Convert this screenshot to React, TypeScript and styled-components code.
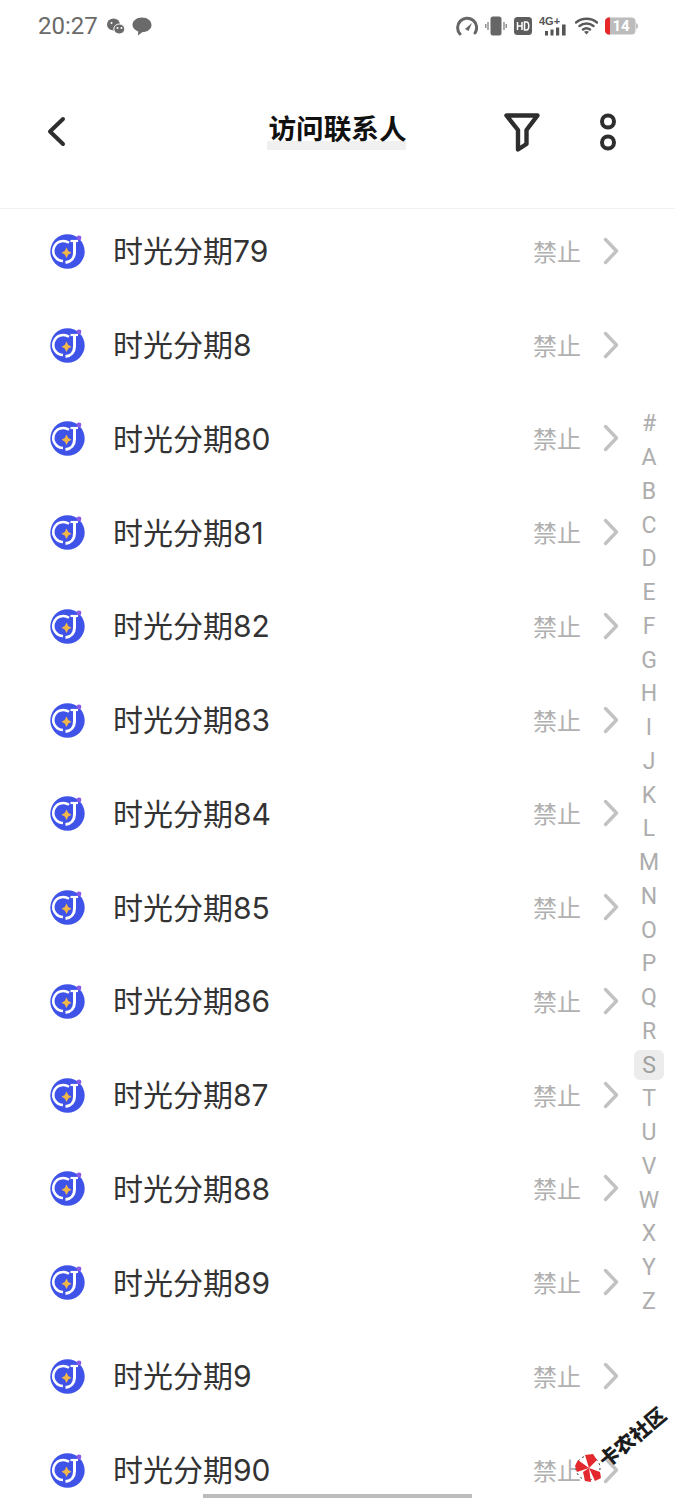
import React from "react";
import styled, { createGlobalStyle } from "styled-components";

const Global = createGlobalStyle`
  html, body { margin: 0; padding: 0; background: #fff; }
  body { font-family: Inter, "Noto Sans CJK SC", sans-serif; }
`;
const Page = styled.div`
  position: relative; width: 675px; height: 1500px; overflow: hidden; background: #fff;
`;
const StatusBar = styled.div`
  height: 52px; display: flex; align-items: center; justify-content: space-between;
  padding: 0 37px 0 38px; box-sizing: border-box; color: #666;
`;
const StatusGroup = styled.div`display: flex; align-items: center; gap: 7px;`;
const Time = styled.span`
  font-family: Roboto, sans-serif; font-size: 24px; line-height: 52px; color: #6a6a6a; margin-right: 2px;
`;
const Nav = styled.div`
  height: 157px; box-sizing: border-box; border-bottom: 1px solid #f0f0f0;
  display: grid; grid-template-columns: 1fr auto 1fr; align-items: center; padding: 4px 46px 0;
`;
const NavRight = styled.div`
  display: flex; justify-content: flex-end; align-items: center; gap: 59px; padding-right: 12px;
`;
const Title = styled.div`
  font-family: "Noto Sans CJK SC", sans-serif; font-size: 27.6px; font-weight: 700; color: #111;
  line-height: 42px; position: relative; z-index: 0; margin-top: -11px; white-space: nowrap;
  &::after { content: ""; position: absolute; z-index: -1; left: -2px; right: 0; top: 35px; height: 9px; background: #f0f0f0; }
`;
const List = styled.div`margin-top: -5px;`;
const Row = styled.div`
  height: 93.75px; display: flex; align-items: center; padding: 0 56px 0 50px; box-sizing: border-box;
`;
const Name = styled.span`
  margin-left: 27px; padding-top: 1px; flex: 1; font-size: 30px; color: #333; line-height: 40px;
  font-family: Inter, "Noto Sans CJK SC", sans-serif;
`;
const State = styled.span`
  font-family: "Noto Sans CJK SC", sans-serif; font-size: 24px; color: #b0b0b0; margin-right: 22px; line-height: 34px;
`;
const Index = styled.div`
  position: absolute; left: 634px; top: 407px; width: 30px; display: flex; flex-direction: column; align-items: center;
`;
const Letter = styled.div<{ $active?: boolean }>`
  width: 30px; height: 33.75px; display: flex; align-items: center; justify-content: center;
  font-family: Roboto, sans-serif; font-size: 23px; color: #adadad;
  ${p => p.$active ? "position: relative; z-index: 0; color: #a0a0a0; &::before { content: ''; position: absolute; z-index: -1; left: 0; right: 0; top: 2px; bottom: 2px; background: #ececec; border-radius: 6px; }" : ""}
`;
const HomeBar = styled.div`
  position: absolute; left: 203px; top: 1494px; width: 269px; height: 4px; background: #bdbdbd;
`;
const Watermark = styled.div`
  position: absolute; left: 570px; top: 1405px; width: 105px; height: 80px;
`;
const WatermarkText = styled.span`
  position: absolute; left: 22px; top: 20px; transform: rotate(-40deg); transform-origin: center;
  font-family: "Noto Sans CJK SC", sans-serif; font-weight: 900; font-size: 20px; color: #1c1c1c; white-space: nowrap; line-height: 24px;
`;
const WatermarkLogo = styled.svg`position: absolute; left: 3px; top: 47px;`;

const Back = () => (
  <svg width="22" height="32" viewBox="0 0 22 32"><path d="M17 3 L4 15.500 L17 28" fill="none" stroke="#2e2e2e" strokeWidth="4" strokeLinecap="round" strokeLinejoin="round"/></svg>
);
const Filter = () => (
  <svg width="36" height="39" viewBox="0 0 36 39"><path d="M2.500 2.500 H33.500 L22.500 17 V31 L14 36.500 V17 Z" fill="none" stroke="#2e2e2e" strokeWidth="4.400" strokeLinejoin="round"/></svg>
);
const More = () => (
  <svg width="18" height="38" viewBox="0 0 18 38"><circle cx="9" cy="8.500" r="6" fill="none" stroke="#2e2e2e" strokeWidth="4"/><circle cx="9" cy="29.500" r="6" fill="none" stroke="#2e2e2e" strokeWidth="4"/></svg>
);
const Chevron = () => (
  <svg width="16" height="28" viewBox="0 0 16 28"><path d="M2.500 2.500 L13.500 14 L2.500 25.500" fill="none" stroke="#c2c2c2" strokeWidth="3.400" strokeLinecap="round" strokeLinejoin="round"/></svg>
);
const Logo = () => (
  <svg width="36" height="36" viewBox="0 0 36 36">
    <circle cx="17.500" cy="18.500" r="17.200" fill="#3f53e8"/>
    <path d="M19 9.800 A10 10 0 1 0 13 28" fill="none" stroke="#fff" strokeWidth="2.600"/>
    <path d="M24.500 8 V19.500 C24.500 25 21 29 15.500 29.500" fill="none" stroke="#fff" strokeWidth="3"/>
    <path d="M20.500 8 H28" stroke="#fff" strokeWidth="2.200"/>
    <path d="M16.500 14.500 L18.300 18 L21.500 19.700 L18.300 21.400 L16.500 25 L14.700 21.400 L11.500 19.700 L14.700 18 Z" fill="#f0b64a"/>
    <circle cx="29" cy="5" r="2.400" fill="#8a5ae8"/>
  </svg>
);
const WeChat = () => (
  <svg width="18" height="17" viewBox="0 0 18 17"><ellipse cx="6.500" cy="6.500" rx="6.500" ry="6" fill="#6a6a6a"/><ellipse cx="12.300" cy="11" rx="5.500" ry="5" fill="#6a6a6a" stroke="#fff" strokeWidth="1"/><circle cx="10.500" cy="10" r="1" fill="#fff"/><circle cx="14.500" cy="10" r="1" fill="#fff"/><circle cx="4.500" cy="5" r="1" fill="#fff"/></svg>
);
const Bubble = () => (
  <svg width="20" height="19" viewBox="0 0 20 19"><path d="M10 0.500 C15.500 0.500 19.500 3.700 19.500 8 C19.500 12.300 15.500 15 10.500 15 L6 18.500 L6.200 14.400 C2.800 13.200 0.500 10.800 0.500 8 C0.500 3.700 4.500 0.500 10 0.500 Z" fill="#6a6a6a"/></svg>
);
const Gauge = () => (
  <svg width="22" height="20" viewBox="0 0 22 20"><path d="M4 18 A9.500 9.500 0 1 1 19 17" fill="none" stroke="#666" strokeWidth="3" strokeLinecap="round"/><path d="M9 13 L16 7 L12.500 15 Z" fill="#666"/></svg>
);
const Vibrate = () => (
  <svg width="22" height="20" viewBox="0 0 22 20"><rect x="5.500" y="0.500" width="11" height="19" rx="2.500" fill="#666"/><path d="M3 6 V14 M0.800 8 V12 M19 6 V14 M21.200 8 V12" stroke="#777" strokeWidth="1.200"/></svg>
);
const Hd = () => (
  <svg width="18" height="18" viewBox="0 0 18 18"><rect width="18" height="18" rx="3.500" fill="#5e5e5e"/><path d="M3.500 5 V13 M8 5 V13 M3.500 9 H8 M10.500 5 V13 H12.500 C15.500 13 15.500 5 12.500 5 Z" fill="none" stroke="#fff" strokeWidth="1.500"/></svg>
);
const Signal = () => (
  <svg width="29" height="20" viewBox="0 0 29 20">
    <text x="0" y="9" fontFamily="Liberation Sans, sans-serif" fontWeight="700" fontSize="11" fill="#555">4G+</text>
    <rect x="6" y="15" width="3" height="4.500" fill="#555"/><rect x="11.500" y="13.500" width="3" height="6" fill="#555"/><rect x="17" y="11.500" width="3.200" height="8" fill="#555"/><rect x="23" y="8.500" width="3.600" height="11" fill="#555"/>
  </svg>
);
const Wifi = () => (
  <svg width="23" height="18" viewBox="0 0 23 18"><path d="M1 5.500 C7 0.500 16 0.500 22 5.500 M4.500 9 C8.500 5.700 14.500 5.700 18.500 9 M8 12.500 C10 11 13 11 15 12.500" fill="none" stroke="#5a5a5a" strokeWidth="2.400" strokeLinecap="round"/><path d="M11.500 17.500 L9 14.800 C10.500 13.800 12.500 13.800 14 14.800 Z" fill="#5a5a5a"/></svg>
);
const Battery = () => (
  <svg width="33" height="18" viewBox="0 0 33 18">
    <rect x="0" y="0.500" width="30.500" height="17" rx="4" fill="#bcbcbc"/>
    <path d="M4 0.500 H5 V17.500 H4 C1.800 17.500 0 15.700 0 13.500 V4.500 C0 2.300 1.800 0.500 4 0.500 Z" fill="#e8262a"/>
    <path d="M31 6 C32.500 6.500 33 7.800 33 9 C33 10.200 32.500 11.500 31 12 Z" fill="#bcbcbc"/>
    <text x="7.500" y="14.200" fontFamily="Roboto, sans-serif" fontWeight="700" fontSize="15" fill="#fff">14</text>
  </svg>
);

const names = ["79","8","80","81","82","83","84","85","86","87","88","89","9","90"];
const letters = "#ABCDEFGHIJKLMNOPQRSTUVWXYZ".split("");

export default function App() {
  return (
    <Page>
      <Global />
      <StatusBar>
        <StatusGroup>
          <Time>20:27</Time>
          <WeChat />
          <Bubble />
        </StatusGroup>
        <StatusGroup>
          <Gauge /><Vibrate /><Hd /><Signal /><Wifi /><Battery />
        </StatusGroup>
      </StatusBar>
      <Nav>
        <Back />
        <Title>访问联系人</Title>
        <NavRight><Filter /><More /></NavRight>
      </Nav>
      <List>
        {names.map(n => (
          <Row key={n}>
            <Logo />
            <Name>时光分期{n}</Name>
            <State>禁止</State>
            <Chevron />
          </Row>
        ))}
      </List>
      <Index>
        {letters.map(l => <Letter key={l} $active={l === "S"}>{l}</Letter>)}
      </Index>
      <Watermark>
        <WatermarkLogo width="32" height="32" viewBox="0 0 32 32">
          <circle cx="15" cy="16" r="12" fill="none" stroke="#333" strokeWidth="1" strokeDasharray="2 3"/>
          <path d="M16 16 L5 8 L2 14 L4 20 Z M16 16 L12 3 L20 2 L24 8 Z M16 16 L27 20 L28 26 L22 29 Z M16 16 L10 20 L12 29 L18 30 Z" fill="#e3292d"/>
        </WatermarkLogo>
        <WatermarkText>卡农社区</WatermarkText>
      </Watermark>
      <HomeBar />
    </Page>
  );
}
